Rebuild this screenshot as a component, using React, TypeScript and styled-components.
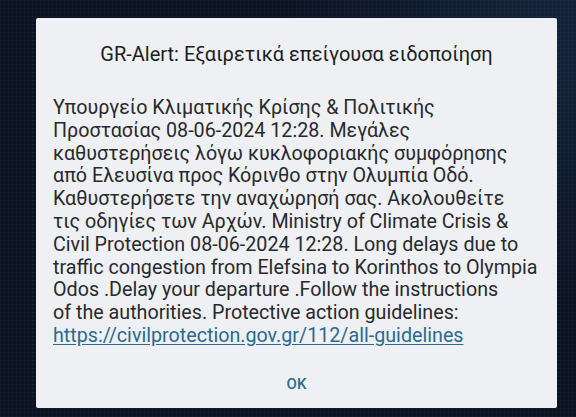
import React from "react";
import styled, { createGlobalStyle } from "styled-components";

const Global = createGlobalStyle`
  html, body { margin: 0; padding: 0; }
  body {
    width: 576px;
    height: 417px;
    overflow: hidden;
    background: #0b1322;
    font-family: Roboto, "Noto Sans", sans-serif;
  }
`;

const Screen = styled.div`
  box-sizing: border-box;
  width: 576px;
  height: 417px;
  padding: 18px 0 0 36px;
  background-color: #0b1322;
  background-image:
    linear-gradient(rgba(255,255,255,0.025) 1px, transparent 1px),
    linear-gradient(90deg, rgba(255,255,255,0.025) 1px, transparent 1px),
    radial-gradient(circle at 95% 10%, #13233a 0%, transparent 40%);
  background-size: 4px 4px, 4px 4px, 100% 100%;
  display: flex;
  align-items: flex-start;
`;

const Dialog = styled.div`
  box-sizing: border-box;
  width: 521px;
  height: 390px;
  background: #eef0f3;
  border-radius: 2px;
  display: flex;
  flex-direction: column;
  padding: 24px 17px 0 17px;
`;

const Title = styled.h1`
  margin: 0;
  font-size: 20px;
  line-height: 24px;
  font-weight: 400;
  color: #1c1e21;
  text-align: center;
`;

const Body = styled.div`
  margin: 31px 0 0 0;
  font-size: 19.7px;
  line-height: 22.8px;
  font-weight: 400;
  color: #282a2d;
`;

const Line = styled.span`
  display: block;
  white-space: nowrap;
`;

const Link = styled.a`
  color: #2b6a90;
  text-decoration: underline;
  text-underline-offset: 2px;
`;

const Actions = styled.div`
  display: flex;
  justify-content: center;
  margin-top: 26px;
`;

const OkButton = styled.button`
  border: none;
  background: none;
  padding: 0;
  font-family: Roboto, sans-serif;
  font-size: 15px;
  line-height: 20px;
  font-weight: 500;
  color: #2d6a90;
`;

const lines = [
  "Υπουργείο Κλιματικής Κρίσης & Πολιτικής",
  "Προστασίας 08-06-2024 12:28. Μεγάλες",
  "καθυστερήσεις λόγω κυκλοφοριακής συμφόρησης",
  "από Ελευσίνα προς Κόρινθο στην Ολυμπία Οδό.",
  "Καθυστερήσετε την αναχώρησή σας. Ακολουθείτε",
  "τις οδηγίες των Αρχών. Ministry of Climate Crisis &",
  "Civil Protection 08-06-2024 12:28. Long delays due to",
  "traffic congestion from Elefsina to Korinthos to Olympia",
  "Odos .Delay your departure .Follow the instructions",
  "of the authorities. Protective action guidelines:",
];

export default function App() {
  return (
    <>
      <Global />
      <Screen>
        <Dialog>
          <Title>GR-Alert: Εξαιρετικά επείγουσα ειδοποίηση</Title>
          <Body>
            {lines.map((l) => (
              <Line key={l}>{l}</Line>
            ))}
            <Line>
              <Link href="#">https://civilprotection.gov.gr/112/all-guidelines</Link>
            </Line>
          </Body>
          <Actions>
            <OkButton>OK</OkButton>
          </Actions>
        </Dialog>
      </Screen>
    </>
  );
}
